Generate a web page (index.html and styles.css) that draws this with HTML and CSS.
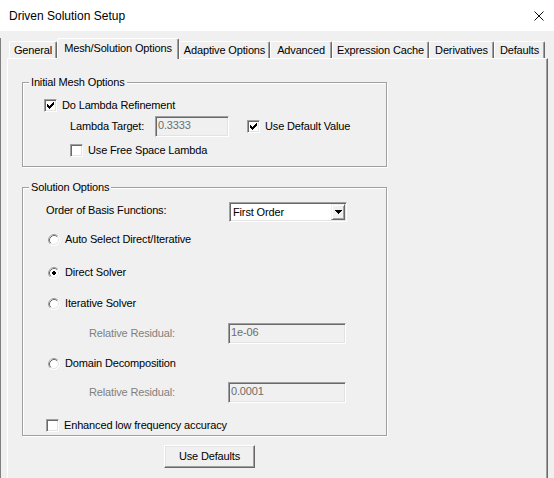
FILE: index.html
```html
<!DOCTYPE html>
<html>
<head>
<meta charset="utf-8">
<title>Driven Solution Setup</title>
<link rel="stylesheet" href="styles.css">
</head>
<body>
<div class="titlebar">
  <span class="title">Driven Solution Setup</span>
  <svg class="close" width="10" height="10" viewBox="0 0 10 10"><path d="M0.5 0.5L9.5 9.5M9.5 0.5L0.5 9.5" stroke="#111" stroke-width="1" fill="none"/></svg>
</div>
<div class="dialog">
  <div class="tabs">
    <div class="tab tab-general">General</div>
    <div class="tab tab-active tab-mesh">Mesh/Solution Options</div>
    <div class="tab tab-adaptive">Adaptive Options</div>
    <div class="tab tab-advanced">Advanced</div>
    <div class="tab tab-expr">Expression Cache</div>
    <div class="tab tab-deriv">Derivatives</div>
    <div class="tab tab-defaults">Defaults</div>
  </div>
  <div class="panel">
    <div class="group group-mesh">
      <div class="group-title">Initial Mesh Options</div>
      <div class="row row-lambda">
        <span class="check"><svg width="11" height="11" viewBox="1 1 11 11" shape-rendering="crispEdges"><path d="M9 3h1v1h-1zM8 4h2v1h-2zM3 5h1v1h-1zM7 5h3v1h-3zM3 6h2v1h-2zM6 6h3v1h-3zM3 7h5v1h-5zM4 8h3v1h-3zM5 9h1v1h-1z" fill="#000"/></svg></span>
        <span class="label">Do Lambda Refinement</span>
      </div>
      <div class="row row-target">
        <span class="field-label target-label">Lambda Target:</span>
        <span class="edit edit-target">0.3333</span>
        <span class="check check-default"><svg width="11" height="11" viewBox="1 1 11 11" shape-rendering="crispEdges"><path d="M9 3h1v1h-1zM8 4h2v1h-2zM3 5h1v1h-1zM7 5h3v1h-3zM3 6h2v1h-2zM6 6h3v1h-3zM3 7h5v1h-5zM4 8h3v1h-3zM5 9h1v1h-1z" fill="#000"/></svg></span>
        <span class="label">Use Default Value</span>
      </div>
      <div class="row row-free">
        <span class="check"></span>
        <span class="label">Use Free Space Lambda</span>
      </div>
    </div>

    <div class="group group-solution">
      <div class="group-title">Solution Options</div>
      <div class="row row-order">
        <span class="field-label order-label">Order of Basis Functions:</span>
        <div class="combo">
          <span class="combo-text">First Order</span>
          <span class="combo-btn"><svg width="7" height="4" viewBox="0 0 7 4" shape-rendering="crispEdges"><path d="M0 0h7v1H0zM1 1h5v1H1zM2 2h3v1H2zM3 3h1v1H3z" fill="#000"/></svg></span>
        </div>
      </div>
      <div class="row row-radio row-auto">
        <svg class="radio" width="12" height="12" viewBox="0 0 12 12"><circle cx="6" cy="6" r="5.5" fill="#fff" stroke="#fff"/><path d="M2.11 9.89A5.5 5.5 0 0 1 9.89 2.11" fill="none" stroke="#a0a0a0"/><path d="M2.82 9.18A4.5 4.5 0 0 1 9.18 2.82" fill="none" stroke="#696969"/><path d="M9.18 2.82A4.5 4.5 0 0 1 2.82 9.18" fill="none" stroke="#e3e3e3"/></svg>
        <span class="label">Auto Select Direct/Iterative</span>
      </div>
      <div class="row row-radio row-direct">
        <svg class="radio" width="12" height="12" viewBox="0 0 12 12"><circle cx="6" cy="6" r="5.5" fill="#fff" stroke="#fff"/><path d="M2.11 9.89A5.5 5.5 0 0 1 9.89 2.11" fill="none" stroke="#a0a0a0"/><path d="M2.82 9.18A4.5 4.5 0 0 1 9.18 2.82" fill="none" stroke="#696969"/><path d="M9.18 2.82A4.5 4.5 0 0 1 2.82 9.18" fill="none" stroke="#e3e3e3"/><path d="M5 4h2v1H5zM4 5h4v2H4zM5 7h2v1H5z" fill="#000" shape-rendering="crispEdges"/></svg>
        <span class="label">Direct Solver</span>
      </div>
      <div class="row row-radio row-iter">
        <svg class="radio" width="12" height="12" viewBox="0 0 12 12"><circle cx="6" cy="6" r="5.5" fill="#fff" stroke="#fff"/><path d="M2.11 9.89A5.5 5.5 0 0 1 9.89 2.11" fill="none" stroke="#a0a0a0"/><path d="M2.82 9.18A4.5 4.5 0 0 1 9.18 2.82" fill="none" stroke="#696969"/><path d="M9.18 2.82A4.5 4.5 0 0 1 2.82 9.18" fill="none" stroke="#e3e3e3"/></svg>
        <span class="label">Iterative Solver</span>
      </div>
      <div class="row row-resid row-resid1">
        <span class="field-label resid-label disabled">Relative Residual:</span>
        <span class="edit edit-resid">1e-06</span>
      </div>
      <div class="row row-radio row-domain">
        <svg class="radio" width="12" height="12" viewBox="0 0 12 12"><circle cx="6" cy="6" r="5.5" fill="#fff" stroke="#fff"/><path d="M2.11 9.89A5.5 5.5 0 0 1 9.89 2.11" fill="none" stroke="#a0a0a0"/><path d="M2.82 9.18A4.5 4.5 0 0 1 9.18 2.82" fill="none" stroke="#696969"/><path d="M9.18 2.82A4.5 4.5 0 0 1 2.82 9.18" fill="none" stroke="#e3e3e3"/></svg>
        <span class="label">Domain Decomposition</span>
      </div>
      <div class="row row-resid row-resid2">
        <span class="field-label resid-label disabled">Relative Residual:</span>
        <span class="edit edit-resid">0.0001</span>
      </div>
      <div class="row row-enhanced">
        <span class="check"></span>
        <span class="label">Enhanced low frequency accuracy</span>
      </div>
    </div>

    <div class="button">Use Defaults</div>
  </div>
</div>
</body>
</html>
```

FILE: styles.css
```css
* { box-sizing: border-box; }

html, body { margin: 0; padding: 0; }

body {
  width: 554px;
  height: 478px;
  overflow: hidden;
  background: #f0f0f0;
  font-family: "Liberation Sans", Arial, sans-serif;
  font-size: 11px;
  letter-spacing: -0.15px;
  color: #000;
}

/* Title bar */
.titlebar {
  height: 31px;
  background: #fff;
  display: flex;
  align-items: center;
  justify-content: space-between;
  padding: 0 10px 0 9px;
}
.title {
  font-size: 12px;
  letter-spacing: 0;
  color: #000;
}
.close { display: block; }

/* Dialog body */
.dialog {
  height: 447px;
  border-left: 1px solid #808080;
}

/* Tabs */
.tabs {
  position: relative;
  z-index: 1;
  display: flex;
  align-items: flex-end;
  height: 20px;
  margin-top: 7px;
  padding-left: 8px;
}
.tab {
  flex: none;
  height: 17px;
  border-top: 1px solid #fff;
  border-left: 1px solid #fff;
  border-right: 1px solid #696969;
  border-radius: 2px 2px 0 0;
  box-shadow: inset -1px 0 0 #a0a0a0;
  background: #f0f0f0;
  text-align: center;
  line-height: 16px;
  white-space: nowrap;
}
.tab-active {
  height: 21px;
  margin-bottom: -1px;
  padding-top: 1px;
}
.tab-general { width: 48px; }
.tab-mesh { width: 122px; }
.tab-adaptive { width: 91px; }
.tab-advanced { width: 62px; }
.tab-expr { width: 97px; }
.tab-deriv { width: 65px; }
.tab-defaults { width: 51px; }

/* Tab panel */
.panel {
  margin-left: 6px;
  width: 541px;
  height: 430px;
  border-top: 1px solid #fff;
  border-left: 1px solid #fff;
  border-right: 1px solid #696969;
  box-shadow: inset -1px 0 0 #a0a0a0;
  padding: 23px 0 0 14px;
}

/* Group boxes */
.group {
  position: relative;
  width: 365px;
  border: 1px solid #a0a0a0;
  box-shadow: 1px 1px 0 #fff, inset 1px 1px 0 #fff;
}
.group-mesh { padding-bottom: 9px; }
.group-solution { margin-top: 20px; padding-bottom: 3px; }
.group-title {
  position: absolute;
  top: -7px;
  left: 6px;
  padding: 0 2px;
  background: #f0f0f0;
  line-height: 13px;
  white-space: nowrap;
}

/* Rows */
.row {
  display: flex;
  align-items: center;
}
.label {
  margin-left: 5px;
  line-height: 13px;
  white-space: nowrap;
}
.field-label {
  flex: none;
  line-height: 13px;
  white-space: nowrap;
}
.disabled { color: #808080; }

.row-lambda { margin-top: 16px; height: 13px; padding-left: 21px; }
.row-target { margin-top: 4px; height: 21px; padding-left: 47px; }
.row-free { margin-top: 7px; height: 13px; padding-left: 47px; }
.target-label { width: 85px; }
.check-default { margin-left: 18px; }

.row-order {
  margin-top: 14px;
  height: 20px;
  padding-left: 23px;
  align-items: flex-start;
}
.order-label { width: 183px; padding-top: 2px; }

.row-radio { height: 13px; padding-left: 25px; }
.row-auto { margin-top: 11px; }
.row-direct { margin-top: 20px; }
.row-iter { margin-top: 18px; }
.row-domain { margin-top: 13px; }

.row-resid { height: 21px; padding-left: 66px; }
.row-resid1 { margin-top: 13px; }
.row-resid2 { margin-top: 12px; }
.resid-label { width: 139px; }

.row-enhanced { margin-top: 16px; height: 13px; padding-left: 23px; }

/* Controls */
.check {
  flex: none;
  display: block;
  width: 13px;
  height: 13px;
  background: #fff;
  border-top: 1px solid #a0a0a0;
  border-left: 1px solid #a0a0a0;
  border-right: 1px solid #fff;
  border-bottom: 1px solid #fff;
  box-shadow: inset 1px 1px 0 #696969, inset -1px -1px 0 #e3e3e3;
}
.check svg { display: block; }

.radio { flex: none; display: block; }

.edit {
  flex: none;
  display: block;
  height: 21px;
  background: #f0f0f0;
  border-top: 1px solid #a0a0a0;
  border-left: 1px solid #a0a0a0;
  border-right: 1px solid #fff;
  border-bottom: 1px solid #fff;
  box-shadow: inset 1px 1px 0 #696969, inset -1px -1px 0 #e3e3e3;
  color: #6d6d6d;
  line-height: 15px;
  padding: 1px 2px 0 2px;
  white-space: nowrap;
}
.edit-target { width: 74px; }
.edit-resid { width: 118px; }

.combo {
  flex: none;
  display: flex;
  align-items: center;
  width: 118px;
  height: 20px;
  background: #fff;
  border-top: 1px solid #a0a0a0;
  border-left: 1px solid #a0a0a0;
  border-right: 1px solid #fff;
  border-bottom: 1px solid #fff;
  box-shadow: inset 1px 1px 0 #696969, inset -1px -1px 0 #e3e3e3;
}
.combo-text {
  padding-left: 3px;
  line-height: 18px;
  white-space: nowrap;
}
.combo-btn {
  margin-left: auto;
  margin-right: 1px;
  width: 14px;
  height: 16px;
  display: flex;
  align-items: center;
  justify-content: center;
  background: #f0f0f0;
  border-top: 1px solid #f0f0f0;
  border-left: 1px solid #f0f0f0;
  border-right: 1px solid #696969;
  border-bottom: 1px solid #696969;
  box-shadow: inset 1px 1px 0 #fff, inset -1px -1px 0 #a0a0a0;
}
.combo-btn svg { display: block; }

.button {
  margin-top: 9px;
  margin-left: 142px;
  width: 91px;
  height: 23px;
  background: #f0f0f0;
  border-top: 1px solid #fff;
  border-left: 1px solid #fff;
  border-right: 1px solid #696969;
  border-bottom: 1px solid #696969;
  box-shadow: inset -1px -1px 0 #a0a0a0, inset 1px 1px 0 #e3e3e3;
  text-align: center;
  line-height: 21px;
  white-space: nowrap;
}
```
